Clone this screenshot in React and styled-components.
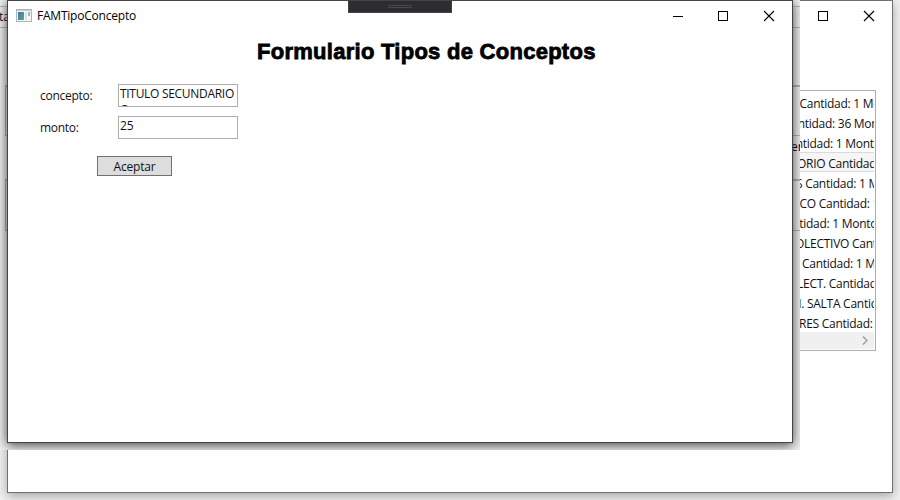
import React from "react";
import styled, { createGlobalStyle } from "styled-components";

const Global = createGlobalStyle`
  *{box-sizing:border-box}
  body{margin:0;background:#fff;overflow:hidden;font:12px/16px "Open Sans","Noto Sans",sans-serif;color:#111}
`;
const Desktop = styled.main`
  position:relative;width:900px;height:500px;overflow:hidden;background:#f0f0f0;
`;
const Window = styled.section`
  position:absolute;left:7px;top:0;width:${p => p.$w}px;height:${p => p.$h}px;
  background:#fff;border:1px solid ${p => p.$edge};
  box-shadow:${p => p.$shadow};
`;
const Snapshot = styled.div`
  position:absolute;left:0;top:0;width:800px;height:450px;overflow:hidden;background:#f0f0f0;
`;
const Backdrop = styled.div`
  display:flex;flex-direction:column;width:800px;padding-top:6px;
`;
const MenuStrip = styled.div`
  height:22px;padding-top:2px;border:solid #bbb;border-width:1px 0;background:#f2f2f2;
  span{margin-left:-1px}
`;
const Group = styled.div`
  height:${p => p.$h}px;margin:${p => p.$mt}px 0 0 5px;border:1px solid #b4b4b4;border-right:0;
  border-top-width:2px;
`;
const Fragment = styled.div`
  height:16px;margin-top:3px;padding-left:791px;white-space:nowrap;color:#000030;
`;
const TitleBar = styled.header`
  display:flex;align-items:center;height:29px;padding-left:8px;
`;
const Title = styled.span`
  margin-left:5px;flex:1;color:#000;letter-spacing:-.22px;
`;
const Controls = styled.div`
  display:flex;margin-left:auto;
  svg{display:block;width:46px;height:28px}
`;
const Heading = styled.h1`
  margin:8px 0 0 249px;width:350px;font:900 22px/28px "Liberation Sans",sans-serif;
  color:#000;white-space:nowrap;letter-spacing:.27px;-webkit-text-stroke:.8px #000;
`;
const Form = styled.form`
  display:flex;flex-direction:column;align-items:flex-start;margin:18px 0 0 32px;
`;
const Field = styled.label`
  display:grid;grid-template-columns:78px 120px;align-items:center;margin-bottom:9px;height:23px;
`;
const Label = styled.span`letter-spacing:-.28px;padding-top:1px;`;
const Input = styled.span`
  height:23px;border:1px solid #abadb3;padding:1px 1px 0;overflow:hidden;white-space:pre;
  letter-spacing:${p => p.$ls || 0}px;
`;
const Button = styled.button`
  margin:8px 0 0 57px;width:75px;height:20px;padding:2px 0 0;border:1px solid #707070;background:#ddd;
  font:inherit;line-height:14px;letter-spacing:-.2px;color:#111;
`;
const List = styled.ul`
  margin:60px 16px 0 auto;width:100px;height:261px;padding:1px 1px 1px 0;list-style:none;
  border:1px solid #abadb3;overflow:hidden;
`;
const Row = styled.li`
  height:20px;padding-top:3.5px;overflow:hidden;white-space:nowrap;color:#111;
  background:${p => (p.$on ? "#f6f6f6" : "#fff")};
  box-shadow:${p => (p.$on ? "inset 0 1px #dadada,inset 0 -1px #dadada" : "none")};
`;
const RowText = styled.span`
  display:inline-block;margin-left:${p => p.$x}px;letter-spacing:-.27px;
`;
const Scroll = styled.div`
  display:flex;align-items:center;justify-content:flex-end;height:17px;padding-right:6px;background:#f0f0f0;
`;
const DebugBar = styled.div`
  position:absolute;left:348px;top:1px;width:104px;height:12px;background:#2d2d30;border:1px solid #434346;border-top:0;
  display:flex;justify-content:center;padding-top:4px;
`;
const Grip = styled.div`width:24px;height:3px;border:solid #4a4a4d;border-width:1px 0;`;

const Caption = ({ min }) => (
  <Controls>
    {min && <svg viewBox="0 0 46 28"><path d="M19 14.5h10" stroke="#000" /></svg>}
    <svg viewBox="0 0 46 28"><rect x="18.5" y="9.5" width="9" height="9" fill="none" stroke="#000" /></svg>
    <svg viewBox="0 0 46 28"><path d="M18 9l10 10m0-10l-10 10" stroke="#000" strokeWidth="1.1" fill="none" /></svg>
  </Controls>
);

const AppIcon = () => (
  <svg width="16" height="14">
    <defs>
      <linearGradient id="pane" x2="1" y2="1"><stop stopColor="#3f72ad" /><stop offset="1" stopColor="#5bab83" /></linearGradient>
    </defs>
    <rect x=".5" y=".5" width="15" height="12" fill="#f4f5f6" stroke="#b0b4b8" />
    <path d="M1 1.5h14" stroke="#c6cbd0" />
    <rect x="2" y="3" width="6" height="8" fill="url(#pane)" />
    <rect x="9" y="3" width="2" height="8" fill="#dfe2e5" />
    <rect x="12" y="3" width="2" height="4" fill="#8fc3b0" />
  </svg>
);

const rows = [
  ["Cantidad: 1 Monto", -1.5], ["Cantidad: 36 Monto", -17], ["Cantidad: 1 Monto", -19],
  ["ORIO Cantidad: 1", -4, true], ["S Cantidad: 1 Monto", -5], ["CO Cantidad: 1", -1.5],
  ["Cantidad: 1 Monto", -22.5], ["OLECTIVO Cantidad", -6], ["Cantidad: 1 Monto", 1],
  ["LECT. Cantidad:", -4], ["N. SALTA Cantidad", -8.5], ["RES Cantidad: 1", -2],
];

export default function App() {
  return (
    <>
      <Global />
      <Desktop>
        <Window $w={886} $h={493} $edge="#707070" $shadow="0 3px 10px rgba(0,0,0,.32)">
          <TitleBar><Caption /></TitleBar>
          <List>
            {rows.map(([t, x, on], i) => <Row key={i} $on={on}><RowText $x={x + 24}>{t}</RowText></Row>)}
            <Scroll><svg width="6" height="9"><path d="M1 .5l4 4-4 4" stroke="#999" strokeWidth="1.3" fill="none" /></svg></Scroll>
          </List>
        </Window>
        <Snapshot>
          <Backdrop>
            <MenuStrip><span>ta</span></MenuStrip>
            <Group $h={51} $mt={57} />
            <Fragment>en</Fragment>
            <Group $h={52} $mt={24} />
          </Backdrop>
          <Window $w={786} $h={443} $edge="#444" $shadow="0 2px 11px rgba(0,0,0,.75)">
            <TitleBar>
              <AppIcon />
              <Title>FAMTipoConcepto</Title>
              <Caption min />
            </TitleBar>
            <Heading>Formulario Tipos de Conceptos</Heading>
            <Form>
              <Field><Label>concepto:</Label><Input $ls={-0.3}>{"TITULO SECUNDARIO\nO"}</Input></Field>
              <Field><Label>monto:</Label><Input>25</Input></Field>
              <Button type="button">Aceptar</Button>
            </Form>
          </Window>
          <DebugBar><Grip /></DebugBar>
        </Snapshot>
      </Desktop>
    </>
  );
}
